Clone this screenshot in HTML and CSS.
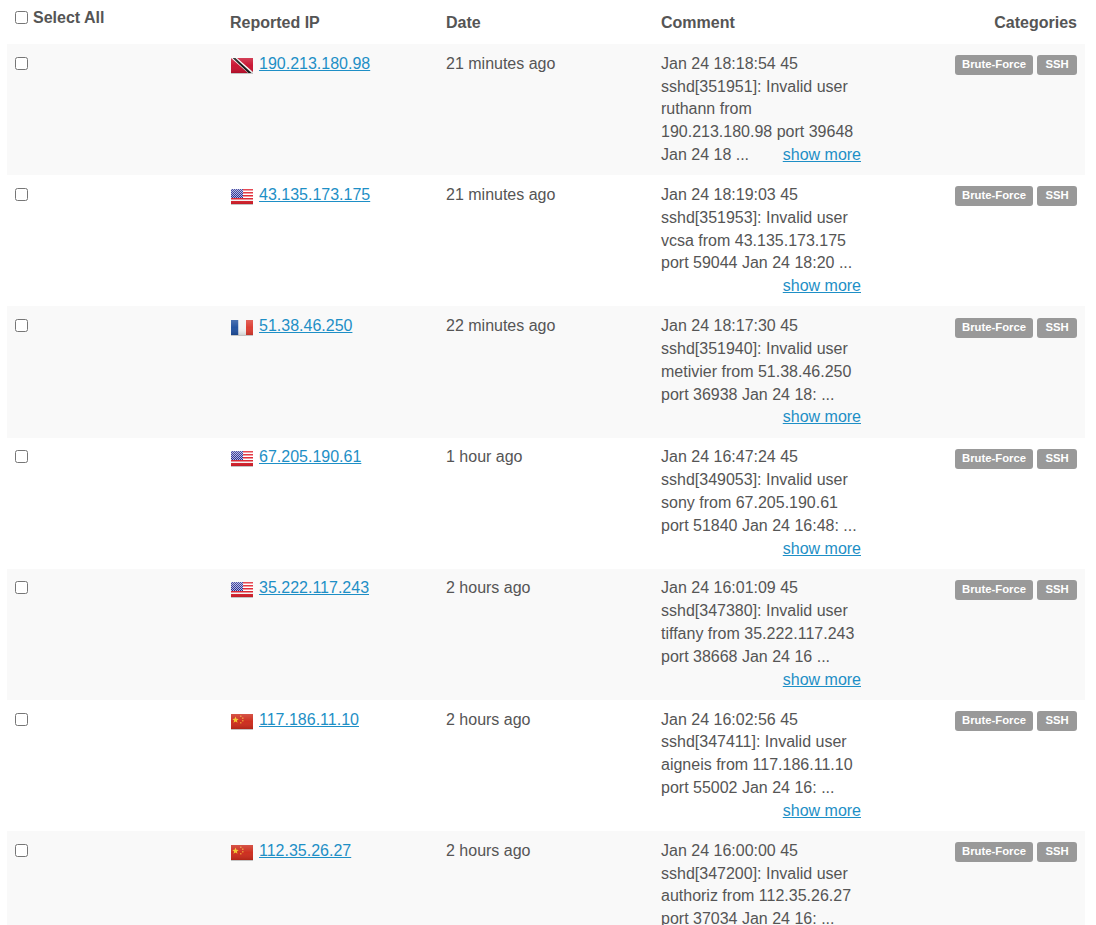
FILE: index.html
```html
<!DOCTYPE html>
<html lang="en">
<head>
<meta charset="utf-8">
<title>Reports</title>
<link rel="stylesheet" href="styles.css">
</head>
<body>
<svg class="defs" width="0" height="0" aria-hidden="true">
  <defs>
    <linearGradient id="gloss" x1="0" y1="0" x2="0" y2="1">
      <stop offset="0" stop-color="#fff" stop-opacity=".2"/>
      <stop offset=".5" stop-color="#fff" stop-opacity=".03"/>
      <stop offset="1" stop-color="#000" stop-opacity=".14"/>
    </linearGradient>
    <pattern id="stars" width="2" height="2" patternUnits="userSpaceOnUse">
      <rect width="2" height="2" fill="#22288c"/>
      <rect width="1" height="1" fill="#aeb2e0"/>
      <rect x="1" y="1" width="1" height="1" fill="#aeb2e0"/>
    </pattern>
    <symbol id="flag-tt" viewBox="0 0 24 18">
      <rect x="1" y="1" width="22" height="15" fill="#c8102e"/>
      <path d="M1 1h6l16 14v1h-5z" fill="#fff"/>
      <path d="M2.500 1h3l16 15h-3z" fill="#111"/>
      <rect x="1" y="1" width="22" height="15" fill="url(#gloss)"/>
      <rect x="1" y="16" width="22" height="1" fill="#c4c4c4"/>
    </symbol>
    <symbol id="flag-us" viewBox="0 0 24 18">
      <rect x="1" y="1" width="22" height="15" fill="#fff"/>
      <path d="M1 1h22v1.500H1zM1 4h22v1.500H1zM1 7h22v1.500H1zM1 10h22v1.500H1zM1 13h22v3H1z" fill="#e0202c"/>
      <rect x="1" y="1" width="12" height="9" fill="url(#stars)"/>
      <rect x="1" y="1" width="22" height="15" fill="url(#gloss)"/>
      <rect x="1" y="16" width="22" height="1" fill="#c4c4c4"/>
    </symbol>
    <symbol id="flag-fr" viewBox="0 0 24 18">
      <rect x="1" y="1" width="7.500" height="15" fill="#1f4f9e"/>
      <rect x="8.500" y="1" width="7.500" height="15" fill="#f3f3f3"/>
      <rect x="16" y="1" width="7" height="15" fill="#dc3b30"/>
      <rect x="1" y="1" width="22" height="15" fill="url(#gloss)"/>
      <rect x="1" y="16" width="22" height="1" fill="#c4c4c4"/>
    </symbol>
    <symbol id="flag-cn" viewBox="0 0 24 18">
      <rect x="1" y="1" width="22" height="15" fill="#cc2a1a"/>
      <path d="M5.500 3.500l.9 2.300 2.300.1-1.800 1.500.6 2.300-2-1.300-2 1.300.6-2.300-1.800-1.500 2.300-.1z" fill="#f2c52a"/>
      <path d="M10 2.500h1.500V4H10zM12 4.500h1.500V6H12zM12 7h1.500v1.500H12zM10 9h1.500v1.500H10z" fill="#e8872a"/>
      <rect x="1" y="1" width="22" height="15" fill="url(#gloss)"/>
      <rect x="1" y="16" width="22" height="1" fill="#c4c4c4"/>
    </symbol>
  </defs>
</svg>
<div class="wrap">
<table class="reports">
  <thead>
    <tr>
      <th class="col-check"><label class="select-all"><input type="checkbox"> Select All</label></th>
      <th class="col-ip">Reported IP</th>
      <th class="col-date">Date</th>
      <th class="col-comment">Comment</th>
      <th class="col-cats">Categories</th>
    </tr>
  </thead>
  <tbody>
    <tr>
      <td><input type="checkbox"></td>
      <td><svg class="flag"><use href="#flag-tt"/></svg><a href="#">190.213.180.98</a></td>
      <td>21 minutes ago</td>
      <td><div class="comment">Jan 24 18:18:54 45 sshd[351951]: Invalid user ruthann from 190.213.180.98 port 39648 Jan 24 18 ... <a class="more" href="#">show more</a></div></td>
      <td class="cats"><span class="label">Brute-Force</span><span class="label">SSH</span></td>
    </tr>
    <tr>
      <td><input type="checkbox"></td>
      <td><svg class="flag"><use href="#flag-us"/></svg><a href="#">43.135.173.175</a></td>
      <td>21 minutes ago</td>
      <td><div class="comment">Jan 24 18:19:03 45 sshd[351953]: Invalid user vcsa from 43.135.173.175 port 59044 Jan 24 18:20 ... <a class="more" href="#">show more</a></div></td>
      <td class="cats"><span class="label">Brute-Force</span><span class="label">SSH</span></td>
    </tr>
    <tr>
      <td><input type="checkbox"></td>
      <td><svg class="flag"><use href="#flag-fr"/></svg><a href="#">51.38.46.250</a></td>
      <td>22 minutes ago</td>
      <td><div class="comment">Jan 24 18:17:30 45 sshd[351940]: Invalid user metivier from 51.38.46.250 port 36938 Jan 24 18: ... <a class="more" href="#">show more</a></div></td>
      <td class="cats"><span class="label">Brute-Force</span><span class="label">SSH</span></td>
    </tr>
    <tr>
      <td><input type="checkbox"></td>
      <td><svg class="flag"><use href="#flag-us"/></svg><a href="#">67.205.190.61</a></td>
      <td>1 hour ago</td>
      <td><div class="comment">Jan 24 16:47:24 45 sshd[349053]: Invalid user sony from 67.205.190.61 port 51840 Jan 24 16:48: ... <a class="more" href="#">show more</a></div></td>
      <td class="cats"><span class="label">Brute-Force</span><span class="label">SSH</span></td>
    </tr>
    <tr>
      <td><input type="checkbox"></td>
      <td><svg class="flag"><use href="#flag-us"/></svg><a href="#">35.222.117.243</a></td>
      <td>2 hours ago</td>
      <td><div class="comment">Jan 24 16:01:09 45 sshd[347380]: Invalid user tiffany from 35.222.117.243 port 38668 Jan 24 16 ... <a class="more" href="#">show more</a></div></td>
      <td class="cats"><span class="label">Brute-Force</span><span class="label">SSH</span></td>
    </tr>
    <tr>
      <td><input type="checkbox"></td>
      <td><svg class="flag"><use href="#flag-cn"/></svg><a href="#">117.186.11.10</a></td>
      <td>2 hours ago</td>
      <td><div class="comment">Jan 24 16:02:56 45 sshd[347411]: Invalid user aigneis from 117.186.11.10 port 55002 Jan 24 16: ... <a class="more" href="#">show more</a></div></td>
      <td class="cats"><span class="label">Brute-Force</span><span class="label">SSH</span></td>
    </tr>
    <tr>
      <td><input type="checkbox"></td>
      <td><svg class="flag"><use href="#flag-cn"/></svg><a href="#">112.35.26.27</a></td>
      <td>2 hours ago</td>
      <td><div class="comment">Jan 24 16:00:00 45 sshd[347200]: Invalid user authoriz from 112.35.26.27 port 37034 Jan 24 16: ... <a class="more" href="#">show more</a></div></td>
      <td class="cats"><span class="label">Brute-Force</span><span class="label">SSH</span></td>
    </tr>
  </tbody>
</table>
</div>
</body>
</html>
```

FILE: styles.css
```css
html, body {
  margin: 0;
  height: 925px;
  overflow: hidden;
  background: #fff;
}
body {
  font-family: "Liberation Sans", Arial, sans-serif;
  font-size: 16px;
  line-height: 22.857px;
  color: #555;
}
.defs {
  position: absolute;
}
.wrap {
  padding: 0 11px 0 7px;
}
.reports {
  width: 1078px;
  table-layout: fixed;
  border-collapse: collapse;
  border-spacing: 0;
}
.reports th {
  box-sizing: border-box;
  height: 44px;
  padding: 12px 8px 9px;
  text-align: left;
  vertical-align: top;
  font-weight: 700;
  color: #555;
}
.col-check { width: 215px; }
.col-ip { width: 216px; }
.col-date { width: 215px; }
.col-comment { width: 216px; }
.reports th.col-check {
  padding-top: 7px;
  padding-bottom: 14px;
}
.reports th.col-cats {
  text-align: right;
}
.select-all {
  display: flex;
  align-items: flex-start;
  gap: 5px;
}
.select-all input {
  margin-top: 3px;
}
.reports td {
  padding: 8.7px 8px 8.2px;
  vertical-align: top;
}
.reports tbody tr:nth-child(odd) {
  background: #f9f9f9;
}
input[type="checkbox"] {
  display: block;
  margin: 4px 0 0;
  width: 13px;
  height: 13px;
}
a {
  color: #1e8fc6;
  text-decoration: underline;
}
.flag {
  width: 24px;
  height: 18px;
  margin-right: 5px;
  vertical-align: -6px;
}
.comment {
  width: 200px;
}
.more {
  float: right;
}
.cats {
  text-align: right;
  font-size: 0;
  line-height: 0;
}
.label {
  display: inline-block;
  box-sizing: border-box;
  min-width: 40px;
  margin-top: 2.5px;
  margin-left: 4px;
  padding: 3px 7px 4px;
  border-radius: 3px;
  background: #999;
  color: #fff;
  font-size: 11.3px;
  font-weight: 700;
  line-height: 13px;
  text-align: center;
}
```
